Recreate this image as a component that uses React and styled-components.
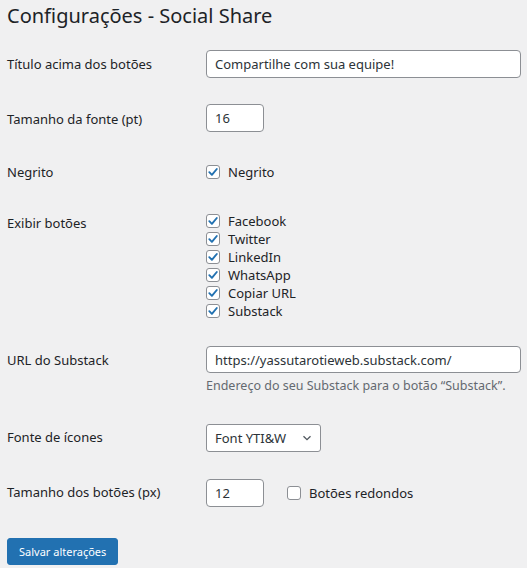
import styled, { createGlobalStyle } from "styled-components";

const Global = createGlobalStyle`
  html, body { margin: 0; padding: 0; background: #f0f0f1; }
  body {
    font-family: "Noto Sans", "Open Sans", sans-serif;
    font-size: 13px;
    color: #1d2327;
  }
`;

const Wrap = styled.div`
  padding: 0 7px;
  width: 514px;
`;

const Title = styled.h1`
  margin: 0;
  padding-top: 2px;
  font-size: 20px;
  font-weight: 400;
  line-height: 28px;
  color: #1d2327;
`;

const Form = styled.form`
  display: flex;
  flex-direction: column;
`;

const Row = styled.div`
  display: grid;
  grid-template-columns: 199px 1fr;
  align-items: start;
  margin-top: ${(p) => p.$gap}px;
`;

const Label = styled.div`
  padding-top: ${(p) => (p.$top == null ? 5 : p.$top)}px;
  line-height: 18px;
`;

const Field = styled.div`
  display: flex;
  flex-direction: column;
`;

const Inline = styled.div`
  display: flex;
  align-items: center;
  gap: 23px;
`;

const Text = styled.input`
  box-sizing: border-box;
  width: ${(p) => p.$w}px;
  height: ${(p) => p.$h || 28}px;
  padding: 0 8px;
  border: 1px solid #8c8f94;
  border-radius: 4px;
  background: #fff;
  font: inherit;
  font-size: 13px;
  color: #2c3338;
  outline: none;
`;

const Hint = styled.p`
  margin: 4px 0 0;
  font-size: 12.5px;
  line-height: 18px;
  color: #646970;
`;

const CheckLine = styled.label`
  display: flex;
  align-items: center;
  gap: 8px;
  height: 18px;
  line-height: 18px;
`;

const Box = styled.span`
  box-sizing: border-box;
  width: 14px;
  height: 14px;
  border: 1px solid #8c8f94;
  border-radius: 3px;
  background: #fff;
  display: flex;
  align-items: center;
  justify-content: center;
  flex-shrink: 0;
`;

const Select = styled.div`
  box-sizing: border-box;
  width: 115px;
  height: 28px;
  padding: 0 8px;
  border: 1px solid #8c8f94;
  border-radius: 3px;
  background: #fff;
  display: flex;
  align-items: center;
  justify-content: space-between;
  color: #2c3338;
`;

const Button = styled.button`
  margin-top: 31px;
  align-self: flex-start;
  height: 27px;
  padding: 0 11px;
  border: 1px solid #2271b1;
  border-radius: 3px;
  background: #2271b1;
  color: #fff;
  font: inherit;
  font-size: 11px;
`;

const Check = ({ on, children }) => (
  <CheckLine>
    <Box>
      {on && (
        <svg width="12" height="12" viewBox="0 0 12 12">
          <path d="M2.3 6.2 L4.9 8.8 L9.8 3" fill="none" stroke="#2271b1" strokeWidth="1.9" strokeLinecap="round" strokeLinejoin="round" />
        </svg>
      )}
    </Box>
    {children}
  </CheckLine>
);

const botoes = ["Facebook", "Twitter", "LinkedIn", "WhatsApp", "Copiar URL", "Substack"];

export default function App() {
  return (
    <Wrap>
      <Global />
      <Title>Configurações - Social Share</Title>
      <Form onSubmit={(e) => e.preventDefault()}>
        <Row $gap={20}>
          <Label>Título acima dos botões</Label>
          <Text $w={315} defaultValue="Compartilhe com sua equipe!" />
        </Row>
        <Row $gap={26}>
          <Label $top={6}>Tamanho da fonte (pt)</Label>
          <Text $w={58} defaultValue="16" />
        </Row>
        <Row $gap={31}>
          <Label $top={0}>Negrito</Label>
          <Check on>Negrito</Check>
        </Row>
        <Row $gap={31}>
          <Label $top={2}>Exibir botões</Label>
          <Field>
            {botoes.map((b) => (
              <Check on key={b}>{b}</Check>
            ))}
          </Field>
        </Row>
        <Row $gap={26}>
          <Label $top={5}>URL do Substack</Label>
          <Field>
            <Text $w={315} $h={27} defaultValue="https://yassutarotieweb.substack.com/" />
            <Hint>Endereço do seu Substack para o botão “Substack”.</Hint>
          </Field>
        </Row>
        <Row $gap={29}>
          <Label $top={4}>Fonte de ícones</Label>
          <Select>
            <span>Font YTI&amp;W</span>
            <svg width="10" height="10" viewBox="0 0 10 10">
              <path d="M1.5 3.2 L5 6.7 L8.5 3.2" fill="none" stroke="#50575e" strokeWidth="1.3" />
            </svg>
          </Select>
        </Row>
        <Row $gap={27}>
          <Label $top={4}>Tamanho dos botões (px)</Label>
          <Inline>
            <Text $w={58} defaultValue="12" />
            <Check>Botões redondos</Check>
          </Inline>
        </Row>
        <Button type="submit">Salvar alterações</Button>
      </Form>
    </Wrap>
  );
}
